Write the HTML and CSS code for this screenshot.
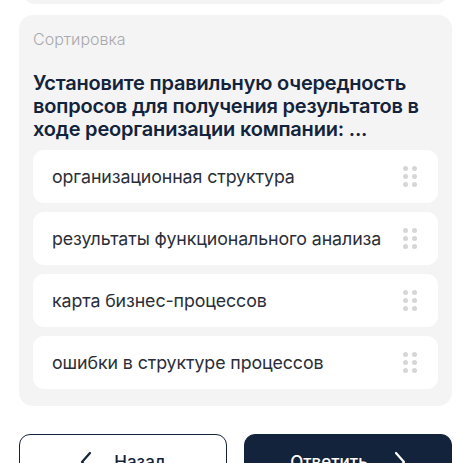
FILE: index.html
```html
<!DOCTYPE html>
<html lang="ru">
<head>
    <meta charset="UTF-8">
    <meta name="viewport" content="width=device-width, initial-scale=1.0">
    <title>Сортировка</title>
    <link rel="stylesheet" href="styles.css">
</head>
<body>
<div class="page">
    <div class="prev-card"></div>

    <div class="quiz-card">
        <div class="quiz-type">Сортировка</div>
        <h2 class="quiz-title">Установите правильную очередность вопросов для получения результатов в ходе реорганизации компании: ...</h2>

        <div class="sort-list">
            <div class="sort-item">
                <span class="sort-text">организационная структура</span>
                <span class="handle"><i></i><i></i><i></i><i></i><i></i><i></i></span>
            </div>
            <div class="sort-item">
                <span class="sort-text">результаты функционального анализа</span>
                <span class="handle"><i></i><i></i><i></i><i></i><i></i><i></i></span>
            </div>
            <div class="sort-item">
                <span class="sort-text">карта бизнес-процессов</span>
                <span class="handle"><i></i><i></i><i></i><i></i><i></i><i></i></span>
            </div>
            <div class="sort-item">
                <span class="sort-text">ошибки в структуре процессов</span>
                <span class="handle"><i></i><i></i><i></i><i></i><i></i><i></i></span>
            </div>
        </div>
    </div>

    <div class="actions">
        <button class="btn btn-outline">
            <svg width="12" height="22" viewBox="0 0 12 22"><path d="M10 2 L2 11 L10 20" fill="none" stroke="currentColor" stroke-width="2.2" stroke-linecap="round" stroke-linejoin="round"/></svg>
            Назад
        </button>
        <button class="btn btn-primary">
            Ответить
            <svg width="12" height="22" viewBox="0 0 12 22"><path d="M2 2 L10 11 L2 20" fill="none" stroke="currentColor" stroke-width="2.2" stroke-linecap="round" stroke-linejoin="round"/></svg>
        </button>
    </div>
</div>
</body>
</html>
```

FILE: styles.css
```css
:root {
    --card-bg: #f4f4f5;
    --item-bg: #ffffff;
    --navy: #13233b;
    --text: #2a2e38;
    --muted: #a9a9ad;
    --dot: #d6d6d9;
}

* {
    margin: 0;
    padding: 0;
    box-sizing: border-box;
}

body {
    font-family: 'Inter', 'Noto Sans', sans-serif;
    background: #ffffff;
    color: var(--text);
}

.page {
    padding: 0 19px;
}

.prev-card {
    height: 40px;
    margin: -36px 4px 0;
    background: var(--card-bg);
    border-radius: 12px;
}

.quiz-card {
    margin-top: 11px;
    background: var(--card-bg);
    border-radius: 14px;
    padding: 14px 14px 17px;
}

.quiz-type {
    font-size: 16px;
    font-weight: 300;
    color: var(--muted);
    line-height: 20px;
}

.quiz-title {
    margin-top: 23px;
    font-size: 20px;
    font-weight: 600;
    line-height: 23px;
    color: var(--navy);
    letter-spacing: -0.2px;
}

.sort-list {
    margin-top: 9px;
    display: flex;
    flex-direction: column;
    gap: 9px;
}

.sort-item {
    height: 53px;
    background: var(--item-bg);
    border-radius: 11px;
    display: flex;
    align-items: center;
    justify-content: space-between;
    padding: 0 21px 0 19px;
}

.sort-text {
    font-size: 17.8px;
    color: var(--text);
    letter-spacing: -0.1px;
}

.handle {
    display: grid;
    grid-template-columns: repeat(2, 5px);
    gap: 3px 4px;
}

.handle i {
    width: 5px;
    height: 5px;
    border-radius: 50%;
    background: var(--dot);
}

.actions {
    margin-top: 28px;
    display: grid;
    grid-template-columns: 1fr 1fr;
    gap: 17px;
}

.btn {
    height: 56px;
    border-radius: 11px;
    font-family: inherit;
    font-size: 17px;
    font-weight: 500;
    display: flex;
    align-items: center;
    justify-content: center;
    gap: 22px;
}

.btn-outline {
    background: #ffffff;
    border: 1.5px solid var(--navy);
    color: var(--navy);
}

.btn-primary {
    background: var(--navy);
    border: 1.5px solid var(--navy);
    color: #ffffff;
    gap: 26px;
}
```
